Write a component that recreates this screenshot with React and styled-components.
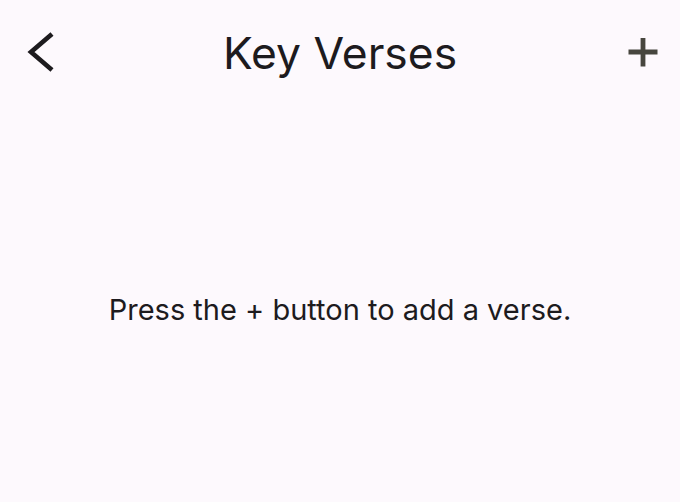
import React from "react";
import styled, { createGlobalStyle } from "styled-components";

const Global = createGlobalStyle`
  html, body { margin: 0; padding: 0; background: #fdf9fd; }
  #root { height: 502px; }
`;

const Screen = styled.div`
  width: 680px;
  height: 502px;
  background: #fdf9fd;
  display: flex;
  flex-direction: column;
  font-family: Inter, Roboto, "Noto Sans", sans-serif;
  overflow: hidden;
`;

const AppBar = styled.header`
  height: 104px;
  display: grid;
  grid-template-columns: 90px 1fr 90px;
  align-items: center;
`;

const IconButton = styled.button`
  border: 0;
  background: transparent;
  padding: 0;
  height: 104px;
  display: flex;
  align-items: center;
  justify-content: ${(p) => (p.$end ? "flex-end" : "flex-start")};
  padding-left: ${(p) => (p.$end ? "0" : "27px")};
  padding-right: ${(p) => (p.$end ? "22px" : "0")};
  color: ${(p) => p.$color};
  cursor: pointer;
`;

const Title = styled.h1`
  margin: 0;
  padding-top: 3px;
  text-align: center;
  font-size: 44.4px;
  font-weight: 400;
  color: #1d1b1e;
  line-height: 101px;
`;

const Body = styled.main`
  flex: 1;
  display: flex;
  align-items: center;
  justify-content: center;
  padding-top: 14px;
`;

const Message = styled.p`
  margin: 0;
  font-size: 29px;
  line-height: 40px;
  color: #1d1b1e;
`;

export default function App() {
  return (
    <>
      <Global />
      <Screen>
        <AppBar>
          <IconButton $color="#1d1b1e" aria-label="Back">
            <svg width="28" height="42" viewBox="0 0 28 42">
              <path d="M25 3 L4 21 L25 39" fill="none" stroke="currentColor" strokeWidth="4.6" strokeLinecap="butt" strokeLinejoin="miter" />
            </svg>
          </IconButton>
          <Title>Key Verses</Title>
          <IconButton $end $color="#47463e" aria-label="Add">
            <svg width="30" height="30" viewBox="0 0 30 30">
              <path d="M15 1 V29.5 M0.5 15 H29.5" fill="none" stroke="currentColor" strokeWidth="4.8" />
            </svg>
          </IconButton>
        </AppBar>
        <Body>
          <Message>Press the + button to add a verse.</Message>
        </Body>
      </Screen>
    </>
  );
}
